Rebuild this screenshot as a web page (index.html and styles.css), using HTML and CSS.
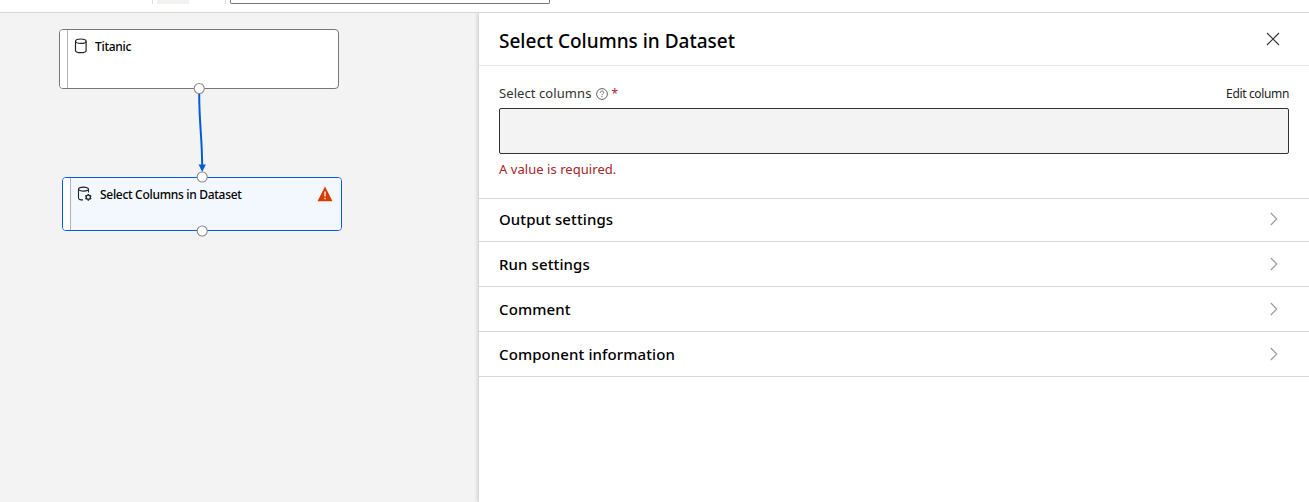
FILE: index.html
```html
<!DOCTYPE html>
<html lang="en">
<head>
<meta charset="utf-8">
<title>Designer</title>
<link rel="stylesheet" href="styles.css">
</head>
<body>
<div class="toolbar">
  <span class="divider"></span>
  <span class="tool"></span>
  <span class="divider second"></span>
  <span class="search"></span>
</div>
<main class="workspace">
  <section class="canvas">
    <div class="node dataset">
      <div class="stripe"></div>
      <div class="node-body">
        <svg class="icon" width="16" height="16" viewBox="0 0 16 16" fill="none" stroke="#242424" stroke-width="1.2"><ellipse cx="7.8" cy="3.2" rx="5.3" ry="2.2"/><path d="M2.5 3.2v9.2c0 1.3 2.3 2.2 5.3 2.2s5.3-.9 5.3-2.2V3.2"/></svg>
        <span class="label">Titanic</span>
      </div>
    </div>
    <div class="node component">
      <div class="stripe"></div>
      <div class="node-body">
        <svg class="icon" width="16" height="16" viewBox="0 0 16 16" fill="none" stroke="#242424" stroke-width="1.1"><ellipse cx="6.5" cy="3.1" rx="5" ry="2"/><path d="M1.5 3.1v8.8c0 1.2 1.7 2 4.5 2M11.5 3.1v3.5"/><circle cx="11.3" cy="11.3" r="2.1" stroke-width="1.3"/><path d="M11.3 7.9v1.3M11.3 13.4v1.3M8.3 9.6l1.1.6M13.2 12.4l1.1.6M14.3 9.6l-1.1.6M9.4 12.4l-1.1.6" stroke-width="1.4"/></svg>
        <span class="label">Select Columns in Dataset</span>
        <svg class="warning" width="16" height="16" viewBox="0 0 16 16"><path d="M8 .6 15.5 15.2H.5Z" fill="#da3b01"/><path d="M8 5.4v5M8 11.8v1.5" stroke="#fff" stroke-width="1.3"/></svg>
      </div>
    </div>
    <svg class="links" width="479" height="489" viewBox="0 13 479 489">
      <path d="M199.2 94C199.2 124 202.2 138 202.2 168" fill="none" stroke="#015cda" stroke-width="2"/>
      <path d="M198.6 164.5h7.2l-3.6 7.5Z" fill="#015cda"/>
      <g fill="#fff" stroke="#8a8a8a" stroke-width="1.1"><circle cx="199.2" cy="88.5" r="5"/><circle cx="202.2" cy="177" r="5"/><circle cx="202.2" cy="231" r="5"/></g>
    </svg>
  </section>
  <aside class="panel">
    <header class="panel-head">
      <h1 class="title">Select Columns in Dataset</h1>
      <svg class="close" width="14" height="14" viewBox="0 0 14 14"><path d="m1 1 12 12M13 1 1 13" stroke="#333" stroke-width="1.1"/></svg>
    </header>
    <div class="form">
      <div class="field-head">
        <span class="field-label">Select columns</span>
        <svg class="help" width="12" height="12" viewBox="0 0 12 12" fill="none" stroke="#555" stroke-width=".9"><circle cx="6" cy="6" r="5.4"/><path d="M4.3 4.7c0-2.3 3.4-2.2 3.4-.2 0 1.2-1.7 1.3-1.7 2.7M6 8v1.1"/></svg>
        <span class="required">*</span>
        <span class="edit">Edit column</span>
      </div>
      <div class="input"></div>
      <div class="error">A value is required.</div>
    </div>
    <div class="section first"><span>Output settings</span><svg class="chevron" width="8" height="14" viewBox="0 0 8 14"><path d="m.8 1 6 6-6 6"/></svg></div>
    <div class="section"><span>Run settings</span><svg class="chevron" width="8" height="14" viewBox="0 0 8 14"><path d="m.8 1 6 6-6 6"/></svg></div>
    <div class="section"><span>Comment</span><svg class="chevron" width="8" height="14" viewBox="0 0 8 14"><path d="m.8 1 6 6-6 6"/></svg></div>
    <div class="section"><span>Component information</span><svg class="chevron" width="8" height="14" viewBox="0 0 8 14"><path d="m.8 1 6 6-6 6"/></svg></div>
  </aside>
</main>
</body>
</html>
```
FILE: styles.css
```css
* { box-sizing: border-box; }
body { margin: 0; height: 502px; overflow: hidden; background: #fff; color: #000; font-family: "Segoe UI", "Noto Sans", sans-serif; white-space: nowrap; }
.toolbar { display: flex; height: 13px; padding-left: 152px; border-bottom: 1px solid #d6d6d6; }
.divider { width: 1px; height: 4px; background: #ddd; }
.tool { width: 32px; height: 4px; margin-left: 4px; background: #f3f2f1; }
.second { margin-left: 36px; }
.search { width: 320px; height: 4px; margin-left: 4px; border: 1px solid #777; border-top: 0; border-radius: 0 0 2px 2px; }
.workspace { display: flex; height: 489px; }
.canvas { position: relative; width: 479px; background: #f3f3f3; }
.node { position: absolute; display: flex; width: 280px; overflow: hidden; border: 1px solid #777; border-radius: 4px; background: #fff; }
.dataset { left: 59px; top: 16px; height: 60px; }
.component { left: 62px; top: 164px; height: 54px; border-color: #015cda; }
.stripe { width: 8px; border-right: 1px solid #b5b5b5; background: #fff; }
.node-body { display: flex; flex: 1; align-items: flex-start; padding: 8px 8px 0 5px; }
.component .node-body { background: #f2f8fd; padding-left: 6px; }
.label { margin-left: 6px; font-size: 12px; font-weight: 500; line-height: 18px; letter-spacing: -.3px; }
.component .label { margin-left: 7px; }
.warning { margin-left: auto; }
.links { position: absolute; left: 0; top: 0; }
.panel { position: relative; flex: 1; background: #fff; box-shadow: -1px 0 4px rgba(0,0,0,.2); clip-path: inset(0 0 0 -6px); }
.panel-head { display: flex; align-items: center; justify-content: space-between; height: 53px; padding: 3px 29px 0 20px; border-bottom: 1px solid #e5e5e5; }
.title { margin: 0; font-size: 19px; font-weight: 500; line-height: 28px; }
.close { margin-top: -3px; }
.form { height: 132px; padding: 17px 20px 0; }
.field-head { display: flex; align-items: center; height: 20px; }
.field-label { font-size: 13px; letter-spacing: .08px; color: #323130; }
.help { margin-left: 4px; margin-top: 1px; }
.required { margin-left: 4px; font-size: 12px; color: #a4262c; }
.edit { margin-left: auto; font-size: 12px; letter-spacing: -.35px; color: #222; }
.input { height: 46px; margin-top: 5px; border: 1px solid #323130; border-radius: 2px; background: #f3f3f3; }
.error { margin-top: 5px; font-size: 13px; line-height: 20px; letter-spacing: .05px; color: #a4262c; }
.section { display: flex; align-items: center; justify-content: space-between; height: 45px; padding: 0 31px 0 20px; border-bottom: 1px solid #d6d6d6; font-size: 15px; font-weight: 500; letter-spacing: .1px; }
.first { height: 44px; padding-bottom: 2px; border-top: 1px solid #d6d6d6; }
.chevron { fill: none; stroke: #999; stroke-width: 1.1; }
```
